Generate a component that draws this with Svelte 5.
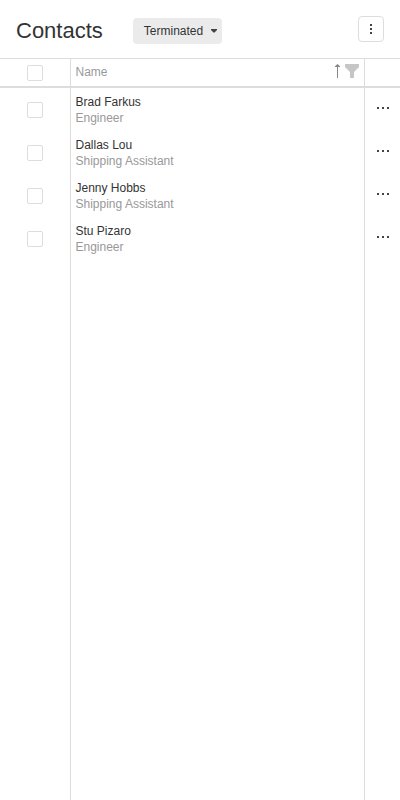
<script>
  const contacts = [
    { name: 'Brad Farkus', position: 'Engineer' },
    { name: 'Dallas Lou', position: 'Shipping Assistant' },
    { name: 'Jenny Hobbs', position: 'Shipping Assistant' },
    { name: 'Stu Pizaro', position: 'Engineer' }
  ];
</script>

<div class="page">
  <header class="toolbar">
    <h1>Contacts</h1>
    <button class="status">
      <span>Terminated</span>
      <svg width="6" height="4" viewBox="0 0 6 4"><path d="M0 0H6V1L3.6 3.4H2.4L0 1Z" fill="#444" /></svg>
    </button>
    <button class="overflow" aria-label="More">
      <svg width="2" height="10" viewBox="0 0 2 10" fill="#444" shape-rendering="crispEdges">
        <path d="M0 0H2V2H0ZM0 4H2V6H0ZM0 8H2V10H0Z" />
      </svg>
    </button>
  </header>

  <div class="grid">
    <div class="row head">
      <div class="cell select"><span class="check"></span></div>
      <div class="cell main">
        <span class="caption">Name</span>
        <svg class="sort" width="5" height="14" viewBox="0 0 5 14">
          <path d="M2 1H3V14H2Z" fill="#888" />
          <path d="M2.5 0L5 2.2V3H0V2.2Z" fill="#888" />
        </svg>
        <svg class="filter" width="14" height="14" viewBox="0 0 14 14">
          <path d="M0 0H14V3L9 8V14H5V8L0 3Z" fill="#c6c6c6" />
        </svg>
      </div>
      <div class="cell actions"></div>
    </div>
    {#each contacts as contact}
      <div class="row">
        <div class="cell select"><span class="check"></span></div>
        <div class="cell main">
          <div class="name">{contact.name}</div>
          <div class="position">{contact.position}</div>
        </div>
        <div class="cell actions">
          <svg width="12" height="2" viewBox="0 0 12 2" fill="#444" shape-rendering="crispEdges">
            <path d="M0 0H2V2H0ZM5 0H7V2H5ZM10 0H12V2H10Z" />
          </svg>
        </div>
      </div>
    {/each}
    <div class="row rest">
      <div class="cell select"></div>
      <div class="cell main"></div>
      <div class="cell actions"></div>
    </div>
  </div>
</div>

<style>
  .page {
    display: flex;
    flex-direction: column;
    height: 800px;
    overflow: hidden;
    background: #fff;
    color: #333;
    font: 12px/16px 'Liberation Sans', Arial, sans-serif;
  }
  .page * {
    box-sizing: border-box;
  }
  .toolbar {
    display: flex;
    align-items: flex-start;
    height: 58px;
    padding: 0 16px;
  }
  h1 {
    margin: 17px 30px 0 0;
    font-size: 22px;
    line-height: 28px;
    font-weight: 400;
  }
  button {
    display: flex;
    align-items: center;
    border: 0;
    padding: 0;
    color: inherit;
    font: inherit;
  }
  .status {
    justify-content: space-between;
    width: 89px;
    height: 26px;
    margin-top: 18px;
    padding: 0 5px 0 11px;
    border-radius: 4px;
    background: #ebebeb;
  }
  .overflow {
    justify-content: center;
    width: 26px;
    height: 26px;
    margin: 16px 0 0 auto;
    border: 1px solid #ddd;
    border-radius: 4px;
    background: #fff;
  }
  .grid {
    display: flex;
    flex: 1;
    flex-direction: column;
    border-top: 1px solid #ddd;
  }
  .row {
    display: flex;
    height: 43px;
  }
  .cell {
    border-right: 1px solid #ddd;
  }
  .select {
    width: 71px;
    padding: 14px 0 0 27px;
  }
  .check {
    display: block;
    width: 16px;
    height: 16px;
    border: 1px solid #ddd;
    border-radius: 2px;
  }
  .main {
    flex: 1;
    padding: 6px 5px 0 4.5px;
  }
  .actions {
    width: 35px;
    padding: 19px 0 0 12px;
    border-right: 0;
  }
  svg {
    display: block;
  }
  .position,
  .caption {
    color: #999;
  }
  .head {
    height: 29px;
    border-bottom: 2px solid #ddd;
  }
  .head .select {
    padding-top: 6px;
  }
  .head .main {
    display: flex;
    padding-top: 5px;
  }
  .sort {
    margin: 0 5px 0 auto;
  }
  .rest {
    flex: 1;
  }
</style>
